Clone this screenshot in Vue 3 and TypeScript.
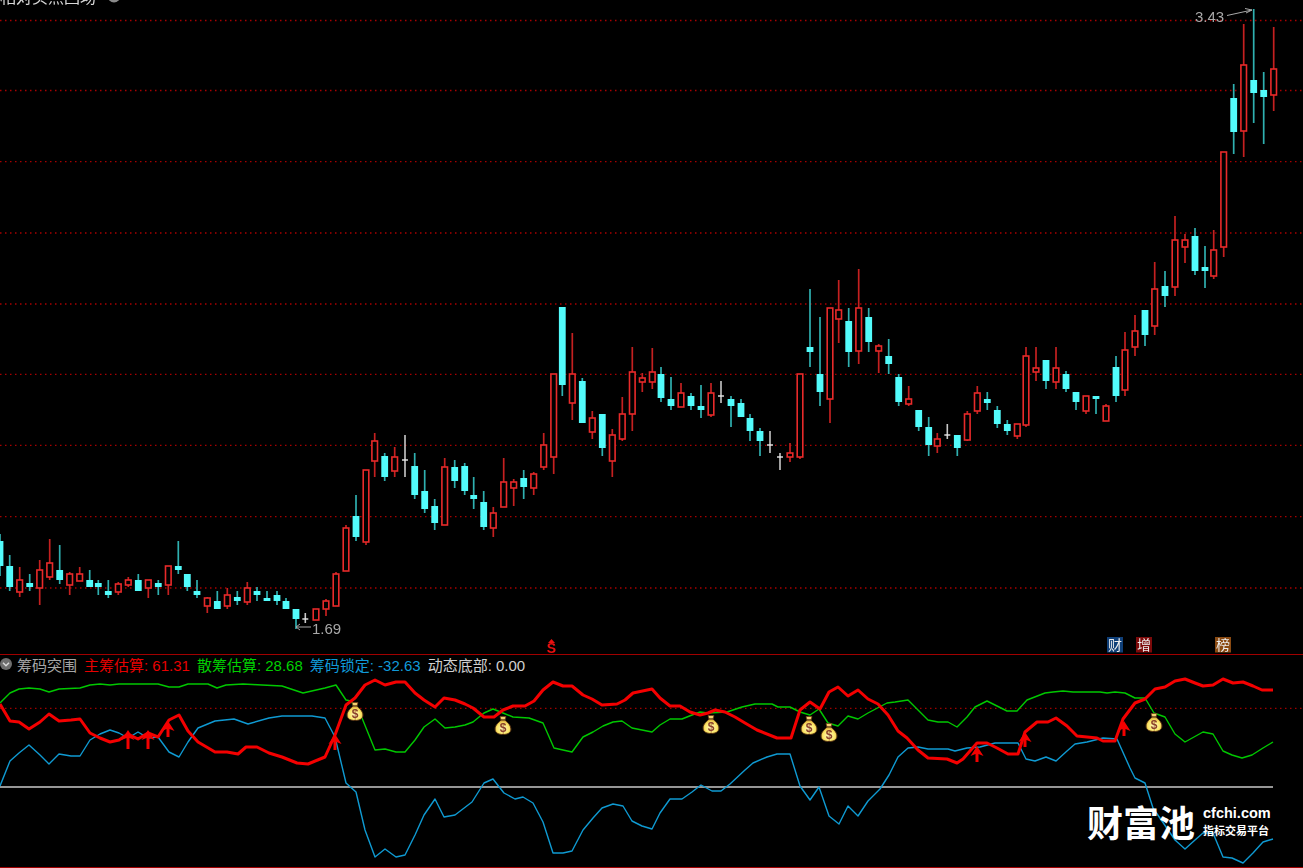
<script setup lang="ts">
type Kind = 'r' | 'c' | 'w'
type Candle = [number, number, number, number, number, Kind]

const candles: Candle[] = [
  [0,534,541,566,576,'c'],[9.7,555,566,587,591,'c'],[19.7,567,580,592,597,'r'],[29.7,574,583,587,591,'c'],
  [39.7,560,570,588,605,'r'],[49.7,539,563,577,580,'r'],[59.7,545,570,580,584,'c'],[69.7,572,574,585,595,'r'],
  [79.7,567,574,581,581,'r'],[89.7,570,580,587,587,'c'],[98.3,580,583,587,595,'c'],[108.3,580,591,595,598,'c'],
  [118.3,582,584,592,595,'r'],[128.3,577,580,585,587,'r'],[138.3,574,580,591,591,'c'],[148.3,580,580,588,598,'r'],
  [158.3,580,583,587,595,'c'],[168.3,566,566,585,595,'r'],[178.3,541,566,570,574,'c'],[187.3,574,574,587,591,'c'],
  [197,580,591,595,598,'c'],[207.3,597,598,606,613,'r'],[217.3,591,601,609,609,'c'],[227.3,588,595,606,609,'r'],
  [237.3,591,597,601,605,'c'],[247.3,582,588,602,605,'r'],[257,587,591,595,601,'c'],[267,591,598,601,601,'c'],
  [277,591,595,601,605,'c'],[286,598,601,609,609,'c'],[296,609,609,619,629,'c'],[305.3,613,619,620,623,'w'],
  [316,609,609,620,620,'r'],[326,599,601,609,616,'r'],[336,572,574,606,606,'r'],[346,525,528,571,571,'r'],
  [356,495,516,537,541,'c'],[366,470,470,542,545,'r'],[374.7,433,441,461,477,'r'],[384.7,453,456,477,481,'c'],
  [394.7,447,457,471,477,'r'],[405,435,460,461,477,'w'],[414.7,453,466,495,499,'c'],[424.7,470,491,509,513,'c'],
  [434.7,499,506,523,530,'c'],[444.7,458,467,525,525,'r'],[454.7,460,467,481,488,'c'],[464.7,463,466,491,495,'c'],
  [473.7,477,495,499,509,'c'],[483.7,491,502,527,530,'c'],[493.3,507,513,528,537,'r'],[503.7,458,482,507,507,'r'],
  [513.7,479,482,488,506,'r'],[523.7,470,478,487,499,'c'],[533.7,472,474,488,495,'r'],[543.7,433,445,467,470,'r'],
  [553.7,374,374,457,474,'r'],[562.3,307,307,385,396,'c'],[572.3,333,374,403,420,'r'],[582.3,378,381,423,423,'c'],
  [592.3,411,418,432,439,'r'],[602.3,414,414,448,456,'c'],[612.3,429,435,461,477,'r'],[622.3,397,414,439,441,'r'],
  [632.3,347,372,414,431,'r'],[642.3,373,378,382,392,'r'],[652.3,348,372,382,389,'r'],[661,367,374,398,402,'c'],
  [671,377,399,406,410,'c'],[681,383,393,407,407,'r'],[691,393,396,406,410,'c'],[701,385,406,410,418,'c'],
  [711,383,393,415,417,'r'],[721,381,396,397,403,'w'],[731,396,399,406,427,'c'],[741,399,403,417,417,'c'],
  [750,414,418,431,441,'c'],[760,428,431,441,456,'c'],[770,431,445,446,453,'w'],[780,453,457,458,470,'w'],
  [790,443,453,457,462,'r'],[800,374,374,457,459,'r'],[810,289,347,352,367,'c'],[820,317,374,392,406,'c'],
  [830,308,308,399,423,'r'],[838.7,280,310,319,343,'r'],[848.7,308,321,352,367,'c'],[858.7,269,308,351,364,'r'],
  [868.7,308,317,342,352,'c'],[878.7,344,346,351,373,'r'],[888.7,339,356,364,374,'c'],[898.7,374,377,402,406,'c'],
  [908.7,386,399,404,406,'r'],[918.7,410,410,427,431,'c'],[928.7,417,427,445,456,'c'],[937.3,433,439,446,453,'r'],
  [947.3,424,435,436,439,'w'],[957.3,435,435,448,456,'c'],[967.3,411,414,440,441,'r'],[977.3,386,393,411,414,'r'],
  [987.3,392,399,403,410,'c'],[997.3,406,410,424,428,'c'],[1007.3,420,424,431,435,'c'],[1017.3,424,424,436,439,'r'],
  [1026,347,356,425,427,'r'],[1036,347,368,372,381,'r'],[1046,360,360,381,389,'c'],[1056,347,368,382,389,'r'],
  [1066,371,374,389,392,'c'],[1076,392,392,402,410,'c'],[1086,396,396,411,414,'r'],[1096,396,396,399,414,'c'],
  [1106,404,406,421,421,'r'],[1116,356,367,396,402,'c'],[1125,332,350,390,396,'r'],[1135,315,331,347,356,'r'],
  [1145,310,310,335,346,'c'],[1154.7,262,289,326,335,'r'],[1165,271,286,296,307,'c'],[1175,216,240,287,296,'r'],
  [1185,234,240,247,263,'r'],[1195,228,236,271,275,'c'],[1205,246,267,271,288,'c'],[1213.7,230,250,276,279,'r'],
  [1223.7,152,152,247,257,'r'],[1233.7,84,98,132,154,'c'],[1243.7,24,65,131,157,'r'],[1253.7,9,80,93,123,'c'],
  [1263.7,72,90,97,144,'c'],[1273.7,27,69,95,111,'r']
]

const gridYs: number[] = [20.5, 90.5, 161.7, 233, 304, 374.3, 445.3, 516.7, 588]

function toPoints(values: number[]): string {
  const pairs: string[] = []
  for (let i = 0; i < values.length; i += 2) pairs.push(`${values[i]},${values[i + 1]}`)
  return pairs.join(' ')
}

const redLine = toPoints([
  0,704,10,721,19,722,29,729,40,722,49,714,59,721,71,720,80,719,90,733,100,738,110,742,119,740,128,734,138,739,148,733,158,737,169,720,179,715,188,731,198,742,215,752,227,752,238,754,246,747,257,747,269,753,282,757,297,763,308,764,325,757,335,735,346,705,355,698,365,685,375,680,385,685,396,682,405,682,415,693,424,700,435,707,444,698,455,700,465,704,473,708,484,717,494,717,503,710,513,706,525,706,534,701,543,690,553,682,563,686,572,686,583,695,592,699,602,705,617,704,625,700,633,693,652,689,660,698,670,706,680,706,690,712,700,715,708,713,715,710,725,712,735,717,745,723,757,730,777,738,791,738,800,710,810,702,820,709,829,692,838,687,848,696,858,690,868,699,878,704,888,715,898,731,907,738,918,750,928,758,947,759,957,763,963,759,977,743,987,743,997,748,1008,754,1018,754,1025,732,1037,722,1048,722,1056,718,1067,726,1077,736,1087,737,1097,738,1103,741,1115,741,1123,719,1135,703,1145,699,1155,689,1165,687,1175,681,1185,679,1195,683,1203,686,1213,685,1223,679,1233,683,1243,682,1253,686,1262,690,1273,690
])
const greenLine = toPoints([
  0,703,10,693,19,689,29,688,40,689,49,692,59,689,80,688,90,685,100,684,110,685,119,684,158,684,169,687,179,687,188,684,208,684,217,688,226,685,243,684,262,685,282,686,303,693,325,688,336,685,346,700,351,701,362,718,375,750,385,749,396,752,405,752,415,740,424,727,435,719,445,728,455,727,465,725,473,722,484,713,493,709,503,713,513,717,529,718,543,723,554,748,563,750,572,752,583,737,593,732,603,726,613,722,622,721,632,728,642,730,652,732,660,725,670,719,682,719,692,715,700,712,708,713,727,712,742,707,755,704,772,704,778,707,790,707,800,712,810,715,819,709,828,723,838,726,848,716,858,719,868,713,887,703,895,702,908,700,918,710,928,720,938,722,948,722,957,727,967,717,975,707,987,701,1007,711,1017,711,1027,700,1045,693,1053,692,1063,691,1073,692,1100,692,1107,693,1115,692,1125,693,1135,698,1145,698,1154,713,1165,717,1175,734,1185,742,1203,732,1213,734,1223,751,1232,755,1242,758,1252,755,1263,748,1273,742
])
const blueLine = toPoints([
  0,786,10,761,19,753,29,745,40,755,49,764,59,754,71,756,80,756,90,740,100,734,110,730,119,733,128,738,138,732,148,738,158,737,169,752,179,757,188,742,198,728,215,721,234,719,248,724,269,718,282,716,312,716,325,718,335,737,346,783,356,792,365,830,375,857,385,849,396,857,405,855,415,835,424,815,435,799,444,817,455,815,472,802,484,783,493,779,504,793,515,799,523,797,533,803,543,822,553,853,563,853,572,851,583,830,593,818,602,808,613,804,623,806,632,821,642,826,652,829,660,813,670,799,682,799,692,792,701,785,712,791,721,791,730,784,745,770,753,763,767,757,777,754,790,754,800,786,810,800,819,787,829,816,839,824,848,806,858,816,868,801,880,789,889,775,898,757,908,748,918,747,928,749,948,749,955,751,967,748,980,747,995,743,1018,743,1026,759,1035,761,1046,757,1056,761,1067,751,1075,744,1087,742,1103,738,1117,739,1130,768,1135,778,1145,783,1153,808,1175,840,1185,849,1195,840,1203,833,1213,833,1223,857,1232,858,1243,863,1253,853,1263,842,1273,839
])

const arrows: { x: number; top: number; bottom: number }[] = [
  { x: 128, top: 730, bottom: 749 },
  { x: 148, top: 730, bottom: 749 },
  { x: 168, top: 721, bottom: 737 },
  { x: 335, top: 734, bottom: 750 },
  { x: 977, top: 746, bottom: 762 },
  { x: 1025, top: 732, bottom: 747 },
  { x: 1124, top: 721, bottom: 736 }
]
const bags: { x: number; y: number }[] = [
  { x: 355, y: 702 },
  { x: 503, y: 716 },
  { x: 711, y: 715 },
  { x: 809, y: 716 },
  { x: 829, y: 723 },
  { x: 1154, y: 713 }
]
const badges: { x: number; w: number; label: string; cls: string }[] = [
  { x: 1107, w: 16, label: '财', cls: 'badge-blue' },
  { x: 1136, w: 16, label: '增', cls: 'badge-red' },
  { x: 1215, w: 16, label: '榜', cls: 'badge-brown' }
]
const readouts: { label: string; cls: string }[] = [
  { label: '主筹估算: 61.31', cls: 'read-red' },
  { label: '散筹估算: 28.68', cls: 'read-green' },
  { label: '筹码锁定: -32.63', cls: 'read-blue' },
  { label: '动态底部: 0.00', cls: 'read-white' }
]

function arrowPath(a: { x: number; top: number; bottom: number }): string {
  const neck = a.top + 10
  return `M${a.x} ${a.top}L${a.x + 6.5} ${neck}L${a.x + 1.5} ${neck - 2}L${a.x + 1.5} ${a.bottom}L${a.x - 1.5} ${a.bottom}L${a.x - 1.5} ${neck - 2}L${a.x - 6.5} ${neck}Z`
}
</script>

<template>
  <div class="screen">
    <section class="price-panel">
      <svg class="chart" viewBox="0 0 1303 654" width="1303" height="654" aria-label="K线图">
        <line v-for="y in gridYs" :key="y" class="grid" x1="0" x2="1303" :y1="y" :y2="y" />
        <text class="cropped-title" x="0" y="3">相对买点回场</text>
        <circle cx="114" cy="-4" r="6.5" fill="#8a8a8a" />
        <g v-for="(c, i) in candles" :key="i" :class="`candle-${c[5]}`">
          <line class="wick" :x1="c[0]" :x2="c[0]" :y1="c[1]" :y2="c[4]" />
          <rect
            v-if="c[5] === 'r'"
            class="body"
            :x="c[0] - 2.8"
            :y="c[2]"
            width="5.6"
            :height="c[3] - c[2]"
          />
          <rect
            v-else-if="c[5] === 'c'"
            class="body"
            :x="c[0] - 3.4"
            :y="c[2]"
            width="6.8"
            :height="c[3] - c[2]"
          />
          <line v-else class="dash" :x1="c[0] - 3" :x2="c[0] + 3" :y1="c[2]" :y2="c[2]" />
        </g>
        <text class="note" x="1195" y="22">3.43</text>
        <path class="note-arrow" d="M1227 15.5L1252 10M1245 8.5L1252 10L1246 13" />
        <text class="note" x="312" y="634">1.69</text>
        <path class="note-arrow" d="M311 627H296M300 624L296 627L300 630" />
        <path class="signal-tip" d="M551.5 639L555 643H548Z" />
        <text class="signal" x="551.5" y="652.8">S</text>
        <g v-for="b in badges" :key="b.label">
          <rect :class="b.cls" :x="b.x" y="637" :width="b.w" height="15.5" />
          <text class="badge-text" :x="b.x + b.w / 2" y="650">{{ b.label }}</text>
        </g>
      </svg>
    </section>

    <section class="indicator-panel">
      <svg class="chart" viewBox="0 655 1303 213" width="1303" height="213" aria-label="筹码突围指标">
        <defs>
          <radialGradient id="bagFill" cx="50%" cy="60%" r="55%">
            <stop offset="0%" stop-color="#fff7c0" />
            <stop offset="70%" stop-color="#fbe566" />
            <stop offset="100%" stop-color="#d8a83a" />
          </radialGradient>
        </defs>
        <line class="mid-dots" x1="0" x2="1303" y1="708.3" y2="708.3" />
        <line class="zero" x1="0" x2="1273" y1="787" y2="787" />
        <polyline class="thin blue" :points="blueLine" />
        <polyline class="thin green" :points="greenLine" />
        <polyline class="thick" :points="redLine" />
        <path v-for="a in arrows" :key="a.x" class="arrow" :d="arrowPath(a)" />
        <g v-for="b in bags" :key="b.x" :transform="`translate(${b.x - 8.5} ${b.y})`">
          <path class="bag-neck" d="M5.5 .5H11.5L10.5 4H6.5Z" />
          <path class="bag-body" d="M6.5 4H10.5C12 6 16.5 8.5 16.5 13C16.5 17 13 18.5 8.5 18.5C4 18.5 .5 17 .5 13C.5 8.5 5 6 6.5 4Z" />
          <text class="bag-sign" x="8.5" y="16">$</text>
        </g>
      </svg>

      <header class="readout-row">
        <span class="collapse-icon">
          <svg viewBox="0 0 12 12" width="12" height="12">
            <circle cx="6" cy="6" r="6" fill="#6e6e6e" />
            <path d="M3 4.8L6 7.8L9 4.8" fill="none" stroke="#d8d8d8" stroke-width="1.5" />
          </svg>
        </span>
        <span class="read-title">筹码突围</span>
        <span v-for="r in readouts" :key="r.label" :class="r.cls">{{ r.label }}</span>
      </header>

      <div class="brand">
        <span class="brand-name">财富池</span>
        <span class="brand-side">
          <span class="brand-url">cfchi.com</span>
          <span class="brand-sub">指标交易平台</span>
        </span>
      </div>
    </section>
  </div>
</template>

<style>
html,
body {
  margin: 0;
  background: #000;
}
</style>

<style scoped>
.screen {
  width: 1303px;
  height: 868px;
  display: flex;
  flex-direction: column;
  background: #000;
  overflow: hidden;
  font-family: "Liberation Sans", "Noto Sans CJK SC", sans-serif;
}
.price-panel {
  height: 654px;
  flex: none;
}
.indicator-panel {
  position: relative;
  height: 214px;
  flex: none;
  box-sizing: border-box;
  border-top: 1.5px solid #a00000;
  border-bottom: 1.5px solid #a00000;
}
.chart {
  display: block;
  overflow: hidden;
  filter: blur(0.25px);
}
.grid {
  stroke: #a80000;
  stroke-width: 1.3;
  stroke-dasharray: 1.5 3.5;
}
.cropped-title {
  fill: #d8d8d8;
  font-size: 16px;
  font-family: "Noto Sans CJK SC", sans-serif;
}
.candle-r .wick {
  stroke: #c42020;
  stroke-width: 1.7;
}
.candle-r .body {
  fill: #000;
  stroke: #e82a2a;
  stroke-width: 1.6;
}
.candle-c .wick {
  stroke: #2fb0b0;
  stroke-width: 1.7;
}
.candle-c .body {
  fill: #52fbfb;
}
.candle-w .wick {
  stroke: #c8c8c8;
  stroke-width: 1.6;
}
.candle-w .dash {
  stroke: #e8e8e8;
  stroke-width: 1.4;
}
.note {
  fill: #a8a8a8;
  font-size: 15px;
}
.note-arrow {
  fill: none;
  stroke: #a8a8a8;
  stroke-width: 1;
}
.signal {
  fill: #e81010;
  font-size: 14px;
  font-weight: 700;
  text-anchor: middle;
}
.signal-tip {
  fill: #e81010;
}
.badge-blue {
  fill: #0f3f78;
}
.badge-red {
  fill: #7c0a0a;
}
.badge-brown {
  fill: #8a4a12;
}
.badge-text {
  fill: #ececec;
  font-size: 14px;
  text-anchor: middle;
  font-family: "Noto Sans CJK SC", sans-serif;
}
.mid-dots {
  stroke: #a00000;
  stroke-width: 1.2;
  stroke-dasharray: 1.5 3.5;
}
.zero {
  stroke: #c8c8c8;
  stroke-width: 1.5;
}
.thin {
  fill: none;
  stroke-width: 1.4;
  stroke-linejoin: round;
}
.blue {
  stroke: #0f9ad2;
}
.green {
  stroke: #00c800;
}
.thick {
  fill: none;
  stroke: #f40000;
  stroke-width: 3;
  stroke-linejoin: round;
}
.arrow {
  fill: #f40000;
}
.bag-neck {
  fill: #f2d070;
  stroke: #6b3a12;
  stroke-width: 0.7;
}
.bag-body {
  fill: url(#bagFill);
  stroke: #4a2a10;
  stroke-width: 1;
}
.bag-sign {
  fill: #8a3f2a;
  font-size: 12px;
  font-weight: 700;
  text-anchor: middle;
}
.readout-row {
  position: absolute;
  left: 0;
  top: 0;
  display: flex;
  align-items: center;
  gap: 7px;
  height: 18px;
  font-size: 15px;
  white-space: nowrap;
}
.collapse-icon {
  display: flex;
  width: 12px;
  margin-right: -2px;
}
.read-title {
  color: #a6a6a6;
}
.read-red {
  color: #e80000;
}
.read-green {
  color: #00d000;
}
.read-blue {
  color: #109ad8;
}
.read-white {
  color: #d0d0d0;
}
.brand {
  position: absolute;
  left: 1087px;
  top: 146px;
  display: flex;
  align-items: center;
  gap: 8px;
  color: #fff;
}
.brand-name {
  font-size: 36px;
  line-height: 40px;
  font-weight: 700;
  font-family: "Noto Sans CJK SC", sans-serif;
}
.brand-side {
  display: flex;
  flex-direction: column;
  gap: 3px;
}
.brand-url {
  font-size: 14.5px;
  line-height: 16px;
  font-weight: 700;
}
.brand-sub {
  font-size: 11px;
  line-height: 13px;
  font-weight: 700;
  font-family: "Noto Sans CJK SC", sans-serif;
}
</style>
